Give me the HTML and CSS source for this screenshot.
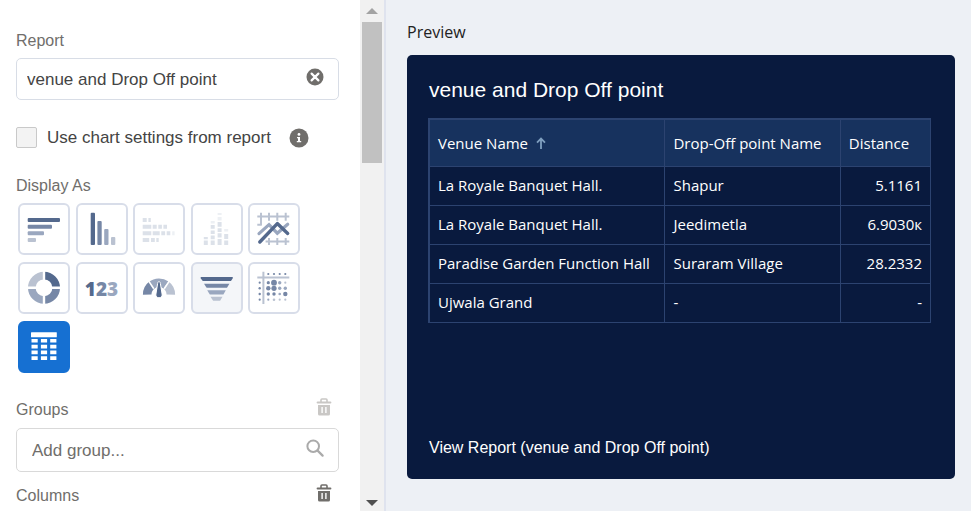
FILE: index.html
```html
<!DOCTYPE html>
<html lang="en">
<head>
<meta charset="utf-8">
<title>Edit Component</title>
<link rel="stylesheet" href="styles.css">
</head>
<body>
<div class="editor">
  <aside class="sidebar">
    <form class="settings">
      <label class="label" for="report">Report</label>
      <div class="field">
        <input id="report" type="text" value="venue and Drop Off point">
        <button type="button" class="icon-button" aria-label="Clear report">
          <svg width="18" height="18" viewBox="0 0 18 18"><circle cx="9" cy="9" r="8.5" fill="#706e6b"/><path d="M5.6 5.6l6.8 6.8M12.4 5.6l-6.8 6.8" stroke="#fff" stroke-width="2.2" stroke-linecap="round"/></svg>
        </button>
      </div>
      <div class="check-row">
        <input id="use-settings" type="checkbox">
        <label for="use-settings">Use chart settings from report</label>
        <button type="button" class="icon-button" aria-label="Info">
          <svg width="20" height="20" viewBox="0 0 20 20"><circle cx="10" cy="10" r="9.5" fill="#706e6b"/><circle cx="10" cy="6.4" r="1.4" fill="#fff"/><path d="M8 9h3v4h1.2v1.2H7.8V13H9v-2.8H8z" fill="#fff"/></svg>
        </button>
      </div>
      <div class="label">Display As</div>
      <div class="tiles">
        <button type="button" class="tile" aria-label="Horizontal bar">
          <svg viewBox="2 2 48 48"><rect x="9.7" y="15" width="32.3" height="4" rx="1" fill="#54698d"/><rect x="9.7" y="21.7" width="24.3" height="4" rx="1" fill="#7687a6"/><rect x="9.7" y="28.3" width="16.3" height="4" rx="1" fill="#9aa7bf"/><rect x="9.7" y="35" width="8.3" height="4" rx="1" fill="#bac2d1"/></svg>
        </button>
        <button type="button" class="tile" aria-label="Vertical bar">
          <svg viewBox="2 2 48 48"><rect x="14.7" y="9.7" width="4.3" height="32.3" rx="1" fill="#54698d"/><rect x="21.4" y="18" width="4.3" height="24" rx="1" fill="#7687a6"/><rect x="28.2" y="26" width="4.3" height="16" rx="1" fill="#9aa7bf"/><rect x="35" y="34" width="4.3" height="8" rx="1" fill="#bac2d1"/></svg>
        </button>
        <button type="button" class="tile" aria-label="Stacked horizontal bar">
          <svg viewBox="2 2 48 48" fill="#dce1e9"><path d="M9.7 15h4v4h-4zM15.4 15h2.4v4h-2.4zM9.7 21.7h8.6v4H9.7zM19.7 21.7h4v4h-4zM25.3 21.7h3.6v4h-3.6zM30.4 21.7H34v4h-3.6zM9.7 28.3h8.6v4H9.7zM19.7 28.3h7v4h-7zM28.3 28.3h3.8v4h-3.8zM33.7 28.3h3.6v4h-3.6zM9.7 35h6.5v4H9.7zM18 35h3.8v4H18zM23.3 35h2.4v4h-2.4z"/><path fill="#edf0f4" d="M39.2 28.3h2.4v4h-2.4z"/></svg>
        </button>
        <button type="button" class="tile" aria-label="Stacked vertical bar">
          <svg viewBox="2 2 48 48" fill="#dce1e9"><path d="M12.8 37.6h4V42h-4zM12.8 34h4v2.2h-4zM19.7 37.6h4V42h-4zM19.7 32.6h4v3.6h-4zM19.7 27.4h4v3.6h-4zM19.7 22h4v3.8h-4zM26.6 36h4v6h-4zM26.6 30.2h4v4.4h-4zM26.6 25.2h4V29h-4zM26.6 19h4v4.8h-4zM33.2 37.6h4V42h-4zM33.2 31h4v5h-4z"/><path fill="#edf0f4" d="M19.7 18h4v2.4h-4zM26.6 14h4v3.4h-4zM26.6 10h4v2h-4zM33.2 26h4v2.6h-4z"/></svg>
        </button>
        <button type="button" class="tile" aria-label="Line">
          <svg viewBox="2 2 48 48" fill="none"><path d="M9.3 13.4h32M13 9.7v12.6M9.3 21.8h4.4M21 9.7v8M29.3 9.7v8M37.7 9.7v8M17.6 38.4h23.7M21 35v7M29.3 35v7M37.7 35v7" stroke="#bac2d1" stroke-width="2"/><path d="M11 30.6l10-9 8.3 8.6 10.4-9" stroke="#9aa7bf" stroke-width="3.2" stroke-linecap="round"/><path d="M11.8 39l17.5-18.4 10.4 9.8" stroke="#54698d" stroke-width="3.4" stroke-linecap="round" stroke-linejoin="round"/></svg>
        </button>
        <button type="button" class="tile" aria-label="Donut">
          <svg viewBox="2 2 48 48" fill="none" stroke-width="7.6"><path d="M26 13.6A12.2 12.2 0 0 1 38.2 25.8" stroke="#54698d"/><path d="M38.2 25.8A12.2 12.2 0 0 1 26 38" stroke="#7687a6"/><path d="M26 38A12.2 12.2 0 0 1 13.8 25.8" stroke="#9aa7bf"/><path d="M13.8 25.8A12.2 12.2 0 0 1 26 13.6" stroke="#bac2d1"/><path d="M26 8v36M8 25.8h36" stroke="#fff" stroke-width="2.4"/></svg>
        </button>
        <button type="button" class="tile" aria-label="Metric">
          <span class="metric"><span class="m1">1</span><span class="m2">2</span><span class="m3">3</span></span>
        </button>
        <button type="button" class="tile" aria-label="Gauge">
          <svg viewBox="2 2 48 48" fill="none" stroke-width="8.6"><path d="M14.2 32.6A11.8 11.8 0 0 1 19 23" stroke="#7687a6"/><path d="M18.6 23.3A11.8 11.8 0 0 1 33 23" stroke="#9aa7bf"/><path d="M33 23A11.8 11.8 0 0 1 37.8 32.6" stroke="#bac2d1"/><path d="M20.8 26.8l-5.4-8.2M31.2 26.8l5.4-8.2" stroke="#fff" stroke-width="1.6"/><path d="M26 19.6c1 0 1.2 1 1.4 2l1.7 10.6c.3 2-1.2 3.600-3.100 3.600s-3.400-1.600-3.100-3.600l1.700-10.600c.2-1 .4-2 1.400-2z" fill="#54698d" stroke="#fff" stroke-width="1"/></svg>
        </button>
        <button type="button" class="tile tile-soft" aria-label="Funnel">
          <svg viewBox="2 2 48 48"><path d="M10.2 15h31.2q.8.2.4 1.2L40 19H11.8l-2.2-2.8q-.4-1 .6-1.2z" fill="#54698d"/><path d="M13 21.7h25.4L36 25.8H15.6z" fill="#7687a6"/><path d="M16.2 28.3h18.6l-2.4 4.1H18.8z" fill="#9aa7bf"/><path d="M19.5 34.8h12l-2.4 4h-7z" fill="#bac2d1"/></svg>
        </button>
        <button type="button" class="tile" aria-label="Scatter">
          <svg viewBox="2 2 48 48"><path d="M9.3 15.6h32M15.4 9.7V42" stroke="#bac2d1" stroke-width="2"/><g fill="#7687a6"><circle cx="20.3" cy="12" r="1.1"/><circle cx="26" cy="12" r="1.1"/><circle cx="31.7" cy="12" r="1.1"/><circle cx="37.3" cy="12" r="1.1"/><circle cx="11.7" cy="20.7" r="1.1"/><circle cx="11.7" cy="26.3" r="1.2"/><circle cx="11.7" cy="32" r="1.2"/><circle cx="11.7" cy="37.7" r="1.1"/><circle cx="20.3" cy="20.7" r="1.6"/><circle cx="26" cy="20.7" r="2.9"/><circle cx="20.3" cy="26.3" r="2.2"/><circle cx="26" cy="26.3" r="2.6"/><circle cx="20.3" cy="32" r="1.7"/><circle cx="26" cy="32" r="1.7"/><circle cx="37.3" cy="32" r="2.2"/></g><g fill="#9aa7bf"><circle cx="31.7" cy="20.7" r="1.7"/><circle cx="31.7" cy="26.3" r="1.7"/><circle cx="37.3" cy="26.3" r="1.7"/><circle cx="31.7" cy="32" r="1.3"/><circle cx="20.3" cy="37.7" r="1.1"/></g><g fill="#bac2d1"><circle cx="37.3" cy="20.7" r="1.1"/><circle cx="26" cy="37.7" r="1.3"/><circle cx="31.7" cy="37.7" r="1.1"/><circle cx="37.3" cy="37.7" r="1.1"/></g></svg>
        </button>
        <button type="button" class="tile tile-selected" aria-label="Table" aria-pressed="true">
          <svg viewBox="2 2 48 48" fill="#fff"><rect x="13" y="11.3" width="25.8" height="5" rx=".5"/><path d="M13.500 18h6.200v3.600h-6.200zM22.900 18h6.200v3.600h-6.200zM32.200 18h6.200v3.600h-6.200zM13.500 23.800h6.200v3.600h-6.200zM22.900 23.800h6.200v3.600h-6.200zM32.200 23.800h6.200v3.600h-6.200zM13.500 29.600h6.200v3.600h-6.200zM22.900 29.600h6.200v3.600h-6.200zM32.200 29.600h6.200v3.600h-6.200zM13.500 35.300h6.200v3.600h-6.200zM22.900 35.300h6.200v3.600h-6.200zM32.200 35.300h6.200v3.600h-6.200z"/></svg>
        </button>
      </div>
      <div class="section-head">
        <label class="label" for="group">Groups</label>
        <button type="button" class="icon-button trash trash-off" aria-label="Remove groups" disabled>
          <svg width="16" height="18" viewBox="0 0 16 18"><path d="M5 4V2q0-1 1-1h4q1 0 1 1v2" fill="none" stroke="currentColor" stroke-width="1.6"/><rect x=".6" y="3.4" width="14.8" height="2" rx="1" fill="currentColor"/><path fill="currentColor" fill-rule="evenodd" d="M2 7h12v9q0 1.6-1.6 1.6H3.6Q2 17.6 2 16zM5.4 9v6h1.4V9zM9.2 9v6h1.4V9z"/></svg>
        </button>
      </div>
      <div class="field field-group">
        <input id="group" type="text" placeholder="Add group...">
        <button type="button" class="icon-button" aria-label="Search">
          <svg width="18" height="18" viewBox="0 0 18 18" fill="none" stroke="#aaa"><circle cx="7.2" cy="7.2" r="5.8" stroke-width="2"/><path d="M11.6 11.6l5 5" stroke-width="2.2" stroke-linecap="round"/></svg>
        </button>
      </div>
      <div class="section-head">
        <span class="label">Columns</span>
        <button type="button" class="icon-button trash" aria-label="Remove columns">
          <svg width="16" height="18" viewBox="0 0 16 18"><path d="M5 4V2q0-1 1-1h4q1 0 1 1v2" fill="none" stroke="currentColor" stroke-width="1.6"/><rect x=".6" y="3.4" width="14.8" height="2" rx="1" fill="currentColor"/><path fill="currentColor" fill-rule="evenodd" d="M2 7h12v9q0 1.6-1.6 1.6H3.6Q2 17.6 2 16zM5.4 9v6h1.4V9zM9.2 9v6h1.4V9z"/></svg>
        </button>
      </div>
    </form>
    <div class="scrollbar" aria-hidden="true">
      <span class="arrow arrow-up"></span>
      <span class="thumb"></span>
      <span class="arrow arrow-down"></span>
    </div>
  </aside>
  <main class="preview">
    <h1 class="preview-label">Preview</h1>
    <section class="card">
      <h2 class="card-title">venue and Drop Off point</h2>
      <table class="report">
        <colgroup><col class="c-venue"><col class="c-point"><col class="c-distance"></colgroup>
        <thead>
          <tr>
            <th>Venue Name <svg class="sort" width="10" height="12" viewBox="0 0 10 12" fill="none" stroke="#7f9fbf" stroke-width="1.8"><path d="M5 12V1.5M1 5.6l4-4 4 4"/></svg></th>
            <th>Drop-Off point Name</th>
            <th>Distance</th>
          </tr>
        </thead>
        <tbody>
          <tr><td>La Royale Banquet Hall.</td><td>Shapur</td><td class="num">5.1161</td></tr>
          <tr><td>La Royale Banquet Hall.</td><td>Jeedimetla</td><td class="num">6.9030к</td></tr>
          <tr><td>Paradise Garden Function Hall</td><td>Suraram Village</td><td class="num">28.2332</td></tr>
          <tr><td>Ujwala Grand</td><td>-</td><td class="num">-</td></tr>
        </tbody>
      </table>
      <a class="report-link" href="#">View Report (venue and Drop Off point)</a>
    </section>
  </main>
</div>
</body>
</html>
```
FILE: styles.css
```css
* {
  box-sizing: border-box;
}

body {
  margin: 0;
  font-family: "Liberation Sans", Arial, sans-serif;
  font-size: 17px;
  line-height: 20px;
  color: #444;
}

button,
input {
  font: inherit;
  color: inherit;
}

.editor {
  display: flex;
  height: 100vh;
  overflow: hidden;
}

.sidebar {
  display: flex;
  flex: none;
  width: 386px;
  border-right: 2px solid #dfe3ee;
  background: #fff;
}

.settings {
  flex: 1;
  min-width: 0;
  padding: 31px 21px 0 16px;
}

.label {
  display: block;
  font-size: 16px;
  color: #706e6b;
}

.field {
  display: flex;
  align-items: center;
  height: 42px;
  margin-top: 7px;
  padding: 0 14px 4px 10px;
  border: 1px solid #d8dde6;
  border-radius: 5px;
}

.field input {
  flex: 1;
  min-width: 0;
  padding: 6px 0 0;
  border: 0;
  outline: 0;
  background: none;
}

.field-group {
  height: 44px;
  margin-top: 8px;
  padding: 0 14px 4px 15px;
  border-color: #d9d9d9;
}

.field input::placeholder {
  color: #706e6b;
  opacity: 1;
}

.icon-button {
  display: block;
  flex: none;
  padding: 0;
  border: 0;
  background: none;
}

.icon-button svg {
  display: block;
}

.check-row {
  display: flex;
  align-items: center;
  gap: 10px;
  margin: 27px 0 28px;
}

.check-row input {
  appearance: none;
  width: 21px;
  height: 21px;
  margin: 0;
  border: 1px solid #c9c9c9;
  border-radius: 2px;
  background: #f3f3f3;
}

.check-row .icon-button {
  margin-left: 8px;
}

.tiles {
  display: grid;
  grid-template-columns: repeat(5, 52px);
  justify-content: space-between;
  row-gap: 7px;
  width: 282px;
  margin: 7px 2px 27px;
}

.tile {
  display: flex;
  align-items: center;
  justify-content: center;
  height: 52px;
  padding: 0;
  border: 2px solid #d8dde9;
  border-radius: 6px;
  background: #fff;
}

.tile svg {
  width: 48px;
  height: 48px;
}

.tile-soft {
  background: #f4f6f9;
}

.tile-selected {
  border-color: #1670d2;
  background: #1670d2;
}

.metric {
  padding-top: 2px;
  font-family: "Open Sans", sans-serif;
  font-size: 19px;
  font-weight: 800;
}

.m1 {
  color: #54698d;
}

.m2 {
  color: #7687a6;
}

.m3 {
  color: #9aa7bf;
}

.section-head {
  display: flex;
  justify-content: space-between;
  padding-right: 7px;
}

.field-group + .section-head {
  margin-top: 14px;
}

.trash {
  height: 18px;
  margin-top: -2px;
  color: #706e6b;
}

.trash-off {
  color: #c9c7c5;
}

.scrollbar {
  display: flex;
  flex: none;
  flex-direction: column;
  align-items: center;
  width: 24px;
  padding: 8px 2px 5px;
  background: #f1f1f1;
}

.arrow {
  border: 6px solid transparent;
}

.arrow-up {
  border-top: 0;
  border-bottom-color: #a3a3a3;
}

.arrow-down {
  margin-top: auto;
  border-bottom: 0;
  border-top-color: #505050;
}

.thumb {
  width: 100%;
  height: 141px;
  margin-top: 8px;
  background: #c1c1c1;
}

.preview {
  display: flex;
  flex: 1;
  flex-direction: column;
  min-width: 0;
  padding: 20px 16px 32px 21px;
  background: #edf0f5;
}

.preview-label {
  margin: 0 0 11px;
  font: 400 16px/24px "Open Sans", "Noto Sans", sans-serif;
  color: #222;
}

.card {
  display: flex;
  flex: 1;
  flex-direction: column;
  padding: 23px 24px 21px 21px;
  border-radius: 5px;
  background: #091a3e;
  color: #fff;
}

.card-title {
  margin: 0 0 16px;
  padding-left: 1px;
  font-size: 21px;
  font-weight: 400;
  line-height: 24px;
}

.report {
  width: 100%;
  border: solid #2c4370;
  border-width: 2px 0 0 2px;
  border-spacing: 0;
  table-layout: fixed;
  font: 400 15px/20px "Open Sans", "Noto Sans", sans-serif;
}

.c-venue {
  width: 47%;
}

.c-point {
  width: 35%;
}

.report th,
.report td {
  height: 39px;
  padding: 0 8px 2px;
  border: solid #2c4370;
  border-width: 0 1px 1px 0;
  font-weight: 400;
  text-align: left;
  white-space: nowrap;
}

.report th {
  height: 47px;
  padding-bottom: 0;
  background: #17325e;
}

.report .num {
  text-align: right;
}

.sort {
  margin-left: 4px;
}

.report-link {
  margin-top: auto;
  padding-left: 1px;
  font-size: 16px;
  color: #fff;
  text-decoration: none;
}
```
